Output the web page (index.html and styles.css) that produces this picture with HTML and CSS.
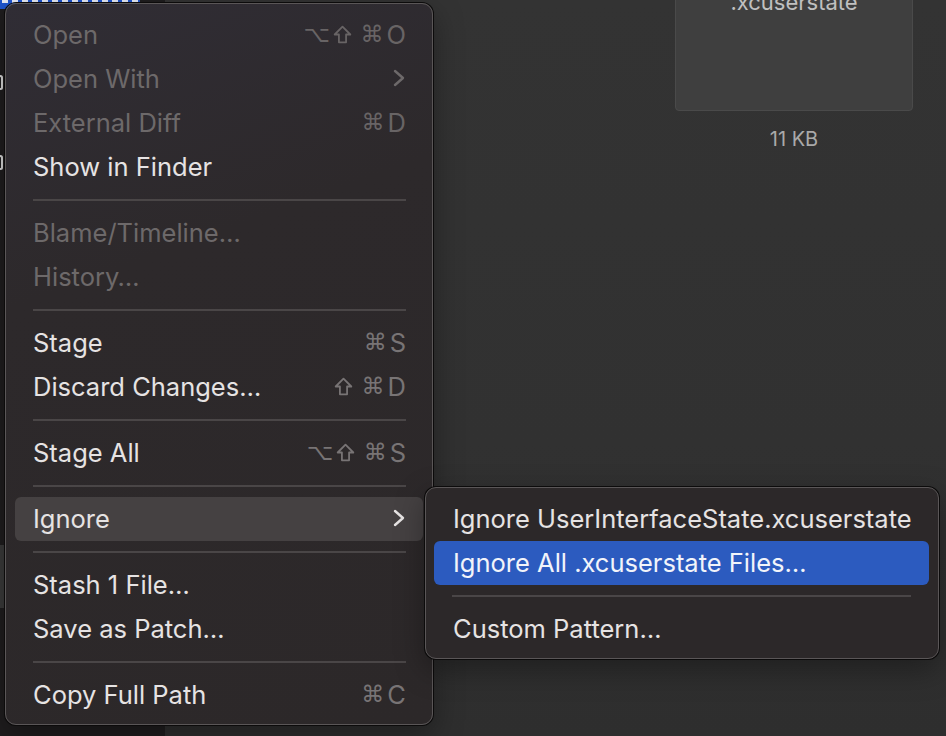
FILE: index.html
```html
<!DOCTYPE html>
<html>
<head>
<meta charset="utf-8">
<link rel="stylesheet" href="styles.css">
</head>
<body>
<div class="app">
  <aside class="sidebar">
    <div class="sel-label"></div>
    <div class="side-mark m1"></div>
    <div class="side-mark m2"></div>
    <div class="side-sel"></div>
  </aside>
  <main class="content">
    <div class="file">
      <div class="tile"><span class="tile-name">.xcuserstate</span></div>
      <div class="size">11 KB</div>
    </div>
  </main>
</div>

<div class="menu main-menu">
  <div class="row disabled"><span class="label">Open</span><span class="keys"><span class="sym opt">⌥</span><svg class="shift" viewBox="0 0 18 18"><path d="M9 1.6 L16.4 9 H12.4 V16.4 H5.6 V9 H1.6 Z"/></svg><span class="sym">⌘</span><span class="key">O</span></span></div>
  <div class="row disabled"><span class="label">Open With</span><svg class="chev" viewBox="0 0 12 18"><polyline points="2,2 10,9 2,16"/></svg></div>
  <div class="row disabled"><span class="label">External Diff</span><span class="keys"><span class="sym">⌘</span><span class="key">D</span></span></div>
  <div class="row"><span class="label">Show in Finder</span></div>
  <div class="sep"></div>
  <div class="row disabled"><span class="label">Blame/Timeline…</span></div>
  <div class="row disabled"><span class="label">History…</span></div>
  <div class="sep"></div>
  <div class="row"><span class="label">Stage</span><span class="keys"><span class="sym">⌘</span><span class="key">S</span></span></div>
  <div class="row"><span class="label">Discard Changes…</span><span class="keys"><svg class="shift" viewBox="0 0 18 18"><path d="M9 1.6 L16.4 9 H12.4 V16.4 H5.6 V9 H1.6 Z"/></svg><span class="sym">⌘</span><span class="key">D</span></span></div>
  <div class="sep"></div>
  <div class="row"><span class="label">Stage All</span><span class="keys"><span class="sym opt">⌥</span><svg class="shift" viewBox="0 0 18 18"><path d="M9 1.6 L16.4 9 H12.4 V16.4 H5.6 V9 H1.6 Z"/></svg><span class="sym">⌘</span><span class="key">S</span></span></div>
  <div class="sep"></div>
  <div class="row open"><span class="label">Ignore</span><svg class="chev" viewBox="0 0 12 18"><polyline points="2,2 10,9 2,16"/></svg></div>
  <div class="sep"></div>
  <div class="row"><span class="label">Stash 1 File…</span></div>
  <div class="row"><span class="label">Save as Patch…</span></div>
  <div class="sep"></div>
  <div class="row"><span class="label">Copy Full Path</span><span class="keys"><span class="sym">⌘</span><span class="key">C</span></span></div>
</div>

<div class="menu sub-menu">
  <div class="row"><span class="label">Ignore UserInterfaceState.xcuserstate</span></div>
  <div class="row active"><span class="label">Ignore All .xcuserstate Files…</span></div>
  <div class="sep"></div>
  <div class="row"><span class="label">Custom Pattern…</span></div>
</div>
</body>
</html>
```

FILE: styles.css
```css
* { box-sizing: border-box; }

html, body {
  margin: 0;
  padding: 0;
}

body {
  width: 946px;
  height: 736px;
  overflow: hidden;
  position: relative;
  background: #323232;
  font-family: Inter, "Noto Sans", sans-serif;
  -webkit-font-smoothing: antialiased;
}

.app {
  display: flex;
  height: 736px;
}

.sidebar {
  width: 165px;
  flex: none;
  background: #1f1d1e;
  display: flex;
  flex-direction: column;
}

.sel-label {
  height: 9px;
  width: 140px;
  background:
    repeating-linear-gradient(90deg, #e8ecf8 0 6px, transparent 6px 10px) 2px 0 / 136px 3px no-repeat,
    #1f55cf;
}

.side-mark {
  width: 5px;
  height: 15px;
  margin-left: -2px;
  border: 2px solid #d6d6d6;
  border-radius: 6px;
}

.m1 { margin-top: 66px; }
.m2 { margin-top: 65px; }

.side-sel {
  margin-top: 375px;
  height: 63px;
  background: #3a3a3a;
}

.content {
  flex: 1;
  display: flex;
  justify-content: flex-end;
  padding-right: 33px;
  background: linear-gradient(180deg, #333333 0%, #313131 60%, #2e2e2e 100%);
}

.file {
  width: 238px;
  display: flex;
  flex-direction: column;
  align-items: center;
}

.tile {
  width: 238px;
  height: 131px;
  margin-top: -20px;
  background: #3f3f3f;
  border: 1px solid #4a4a4a;
  border-radius: 4px;
  display: flex;
  justify-content: center;
}

.tile-name {
  color: #c0c0c0;
  font-size: 22px;
  line-height: 26px;
  margin-top: 8px;
}

.size {
  margin-top: 16px;
  color: #a9a9a9;
  font-size: 20px;
  line-height: 24px;
}

/* menus */
.menu {
  position: absolute;
  background: linear-gradient(160deg, #302d35 0%, #2d292b 35%, #2c2829 100%);
  border: 1px solid #5a5657;
  border-radius: 11px;
  box-shadow: 0 0 0 1px #0c0b0b, 0 10px 30px rgba(0, 0, 0, 0.35);
  display: flex;
  flex-direction: column;
}

.main-menu {
  left: 5px;
  top: 3px;
  width: 428px;
  height: 722px;
  padding: 9px 9px 7px 9px;
}

.sub-menu {
  left: 425px;
  top: 487px;
  width: 514px;
  height: 172px;
  padding: 9px 9px 7px 8px;
  background: #2c2829;
}

.row {
  height: 44px;
  flex: none;
  display: flex;
  align-items: center;
  justify-content: space-between;
  padding: 0 17px 2px 18px;
  border-radius: 6px;
  color: #e6e3e3;
  font-size: 25.5px;
  white-space: nowrap;
}

.sub-menu .row {
  padding-left: 19px;
}

.row.disabled {
  color: #6d696a;
}

.row.open {
  background: #454142;
}

.row.active {
  background: #2c5bbf;
  color: #f2f4fa;
}

.keys {
  display: flex;
  align-items: center;
  color: #787475;
  gap: 5px;
}

.row.disabled .keys {
  color: #686465;
}

.sym {
  font-family: "DejaVu Sans", sans-serif;
  font-size: 23px;
  width: 21px;
  text-align: center;
}

.sym.opt {
  margin-right: 3px;
}

.shift {
  width: 19px;
  height: 19px;
  margin-right: 4px;
  fill: none;
  stroke: currentColor;
  stroke-width: 1.7;
  stroke-linejoin: round;
}

.key {
  font-size: 25.5px;
}

.chev {
  width: 12px;
  height: 18px;
  margin-right: 1px;
  fill: none;
  stroke: #6d696a;
  stroke-width: 2.4;
  stroke-linecap: round;
  stroke-linejoin: round;
}

.row.open .chev {
  stroke: #e6e3e3;
}

.sep {
  height: 22px;
  flex: none;
  display: flex;
  align-items: center;
  padding: 0 17px 0 18px;
}

.sep::before {
  content: "";
  display: block;
  width: 100%;
  height: 2px;
  background: #4a4647;
}

.sub-menu .sep {
  padding: 0 18px 0 18px;
}
```
